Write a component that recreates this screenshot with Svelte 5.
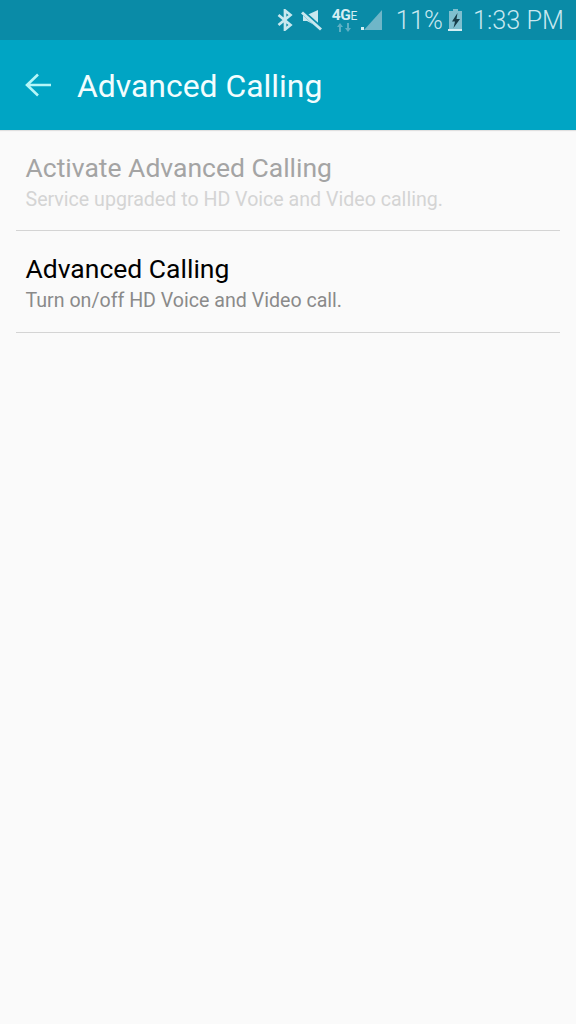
<script>
  const rows = [
    { title: 'Activate Advanced Calling', sub: 'Service upgraded to HD Voice and Video calling.', disabled: true },
    { title: 'Advanced Calling', sub: 'Turn on/off HD Voice and Video call.', disabled: false }
  ];
</script>

<div class="screen">
  <div class="status">
    <svg class="bt" width="16" height="22" viewBox="0 0 16 22" fill="none" stroke="#c9e8ef" stroke-width="2.7">
      <path d="M1.500 6l12 10-5.500 4.500v-19L13.500 6l-12 10" />
    </svg>
    <svg class="mute" width="22" height="22" viewBox="0 0 22 22">
      <path d="M2 6h4L17 1v17L6 12H2z" fill="#c9e8ef" />
      <path d="M0 1.500l20 18" stroke="#0a8ba7" stroke-width="4.500" />
      <path d="M1 3.500l19 17" stroke="#c9e8ef" stroke-width="3" />
    </svg>
    <div class="net">
      <span class="lte">4G<small>E</small></span>
      <svg width="14" height="9" viewBox="0 0 14 9" fill="#5eb0c4">
        <path d="M3 0l3 4H4v5H2V4H0zM11 9L8 5h2V0h2v5h2z" />
      </svg>
    </div>
    <svg class="signal" width="22" height="22" viewBox="0 0 22 22">
      <path d="M21 1v20H3z" fill="#6fb6c8" />
      <path d="M0 18h3v3H0z" fill="#d5eef3" />
    </svg>
    <span class="pct">11%</span>
    <svg class="batt" width="15" height="23" viewBox="0 0 15 23">
      <path d="M5 0h5v2h4v18H1V2h4z" fill="#7fbfcf" />
      <path d="M0 20h14v2H0z" fill="#d5eef3" />
      <path d="M9.500 4L4 12.500h3L5.500 19l6.500-9H8.500z" fill="#173c48" />
    </svg>
    <span class="time">1:33 PM</span>
  </div>

  <header class="bar">
    <svg class="back" width="28" height="24" viewBox="0 0 28 24" fill="none" stroke="#b5f6f8" stroke-width="2.6">
      <path d="M1.500 12H26M13 1.500L2 12l11 10.500" />
    </svg>
    <h1>Advanced Calling</h1>
  </header>

  <div class="list">
    {#each rows as row}
      <div class="row" class:disabled={row.disabled}>
        <div class="title">{row.title}</div>
        <div class="sub">{row.sub}</div>
      </div>
    {/each}
  </div>
</div>

<style>
  :global(body) {
    margin: 0;
    background: #fafafa;
  }

  .screen {
    width: 576px;
    height: 1024px;
    background: #fafafa;
    font-family: Roboto, "Liberation Sans", sans-serif;
    overflow: hidden;
  }

  .status {
    height: 40px;
    background: #0a8ba7;
    display: flex;
    align-items: center;
    justify-content: flex-end;
    padding-right: 12px;
    color: #c8e8f0;
    box-sizing: border-box;
  }

  .bt {
    margin-right: 8px;
  }

  .mute {
    margin-right: 9px;
  }

  .net {
    display: flex;
    flex-direction: column;
    align-items: center;
    width: 25px;
    margin-top: 1px;
    margin-right: 4px;
  }

  .lte {
    font-size: 15.500px;
    line-height: 13px;
    font-weight: 700;
    letter-spacing: -0.3px;
    color: #d5eef3;
  }

  .lte small {
    font-size: 12px;
    font-weight: 400;
  }

  .signal {
    margin-right: 13px;
  }

  .pct {
    font-size: 25.500px;
    font-weight: 300;
    margin-right: 5px;
  }

  .batt {
    margin-right: 10px;
  }

  .time {
    font-size: 25.300px;
    font-weight: 300;
  }

  .bar {
    height: 90px;
    background: #00a5c4;
    display: flex;
    align-items: center;
    padding-left: 25px;
    box-sizing: border-box;
    gap: 24px;
    box-shadow: 0 1px 1px rgba(0, 0, 0, 0.1);
  }

  .back {
    flex: none;
  }

  h1 {
    margin: 0;
    font-size: 31.900px;
    font-weight: 400;
    color: #f2fdfe;
    margin-top: 1px;
  }

  .list {
    padding: 0 16px;
  }

  .row {
    height: 102px;
    border-bottom: 1px solid #d4d4d4;
    padding: 20px 9.500px 0;
    box-sizing: border-box;
  }

  .row.disabled {
    height: 101px;
  }

  .title {
    font-size: 26.500px;
    line-height: 36px;
    color: #000;
  }

  .sub {
    font-size: 19.600px;
    line-height: 26px;
    color: #8a8a8a;
    margin-top: 1px;
  }

  .disabled .title {
    color: #a4a4a4;
  }

  .disabled .sub {
    color: #d4d4d4;
  }
</style>
